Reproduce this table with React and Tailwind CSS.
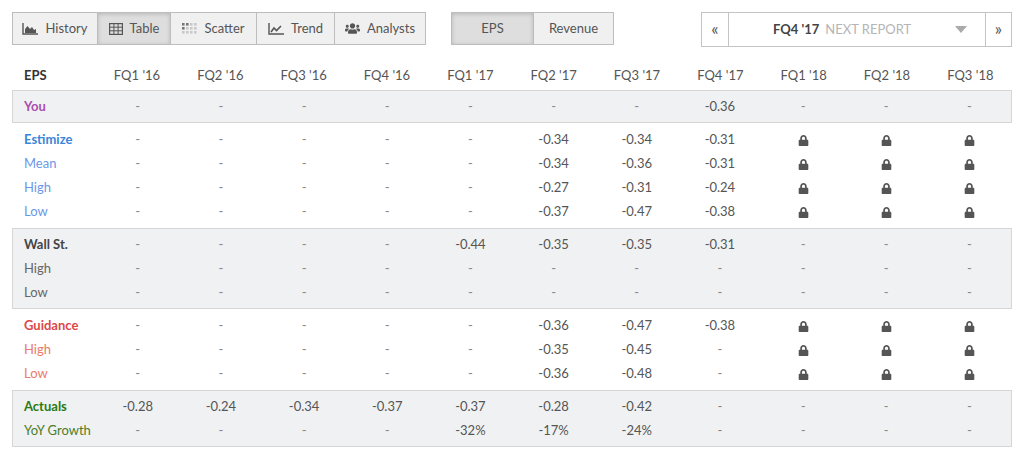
import React from "react";
import { FaUsers, FaLock } from "react-icons/fa";

const quarters = [
  "FQ1 '16", "FQ2 '16", "FQ3 '16", "FQ4 '16",
  "FQ1 '17", "FQ2 '17", "FQ3 '17", "FQ4 '17",
  "FQ1 '18", "FQ2 '18", "FQ3 '18",
];

const L = "lock";
const d = "-";

// sections of the table, gray ones get a border all round
const sections = [
  {
    gray: true,
    rows: [{ label: "You", cls: "font-bold text-[#a94fae]", vals: [d, d, d, d, d, d, d, "-0.36", d, d, d] }],
  },
  {
    gray: false,
    rows: [
      { label: "Estimize", cls: "font-bold text-[#3a86d8]", vals: [d, d, d, d, d, "-0.34", "-0.34", "-0.31", L, L, L] },
      { label: "Mean", cls: "text-[#6b98e6]", vals: [d, d, d, d, d, "-0.34", "-0.36", "-0.31", L, L, L] },
      { label: "High", cls: "text-[#6b98e6]", vals: [d, d, d, d, d, "-0.27", "-0.31", "-0.24", L, L, L] },
      { label: "Low", cls: "text-[#6b98e6]", vals: [d, d, d, d, d, "-0.37", "-0.47", "-0.38", L, L, L] },
    ],
  },
  {
    gray: true,
    rows: [
      { label: "Wall St.", cls: "font-bold text-[#444]", vals: [d, d, d, d, "-0.44", "-0.35", "-0.35", "-0.31", d, d, d] },
      { label: "High", cls: "text-[#666]", vals: [d, d, d, d, d, d, d, d, d, d, d] },
      { label: "Low", cls: "text-[#666]", vals: [d, d, d, d, d, d, d, d, d, d, d] },
    ],
  },
  {
    gray: false,
    rows: [
      { label: "Guidance", cls: "font-bold text-[#dc4848]", vals: [d, d, d, d, d, "-0.36", "-0.47", "-0.38", L, L, L] },
      { label: "High", cls: "text-[#ea7b6a]", vals: [d, d, d, d, d, "-0.35", "-0.45", d, L, L, L] },
      { label: "Low", cls: "text-[#ea7b6a]", vals: [d, d, d, d, d, "-0.36", "-0.48", d, L, L, L] },
    ],
  },
  {
    gray: true,
    rows: [
      { label: "Actuals", cls: "font-bold text-[#2d7a10]", vals: ["-0.28", "-0.24", "-0.34", "-0.37", "-0.37", "-0.28", "-0.42", d, d, d, d] },
      { label: "YoY Growth", cls: "text-[#4d7c28]", vals: [d, d, d, d, "-32%", "-17%", "-24%", d, d, d, d] },
    ],
  },
];

const HistoryIcon = () => (
  <svg width="16" height="12" viewBox="0 0 16 12">
    <path d="M1 0v11h15" stroke="#555" strokeWidth="1.4" fill="none" />
    <path d="M3 10V6l2.5-3 2.5 3 2-2 2 3 2-1v4z" fill="#555" />
  </svg>
);

const TableIcon = () => (
  <svg width="14" height="12" viewBox="0 0 14 12">
    <rect x="0.6" y="0.6" width="12.8" height="10.8" fill="none" stroke="#555" strokeWidth="1.2" />
    <path d="M0.6 4.2h12.8M0.6 7.8h12.8M4.9 0.6v10.8M9.1 0.6v10.8" stroke="#555" strokeWidth="1" />
  </svg>
);

const ScatterIcon = () => {
  const dots = [];
  for (let r = 0; r < 3; r++) {
    for (let c = 0; c < 4; c++) {
      const dark = (r === 0 && c < 2) || (r === 1 && c === 0);
      dots.push(
        <rect key={r + "-" + c} x={c * 4} y={r * 4} width="2.6" height="2.6" fill={dark ? "#777" : "#c9c9c9"} />
      );
    }
  }
  return (
    <svg width="15" height="11" viewBox="0 0 15 11">
      {dots}
    </svg>
  );
};

const TrendIcon = () => (
  <svg width="16" height="12" viewBox="0 0 16 12">
    <path d="M1 0v11h15" stroke="#555" strokeWidth="1.4" fill="none" />
    <path d="M3 9l3-4 2.5 2.5L13 3" stroke="#555" strokeWidth="1.6" fill="none" />
  </svg>
);

const tabs = [
  { name: "History", icon: <HistoryIcon />, w: "w-[84px]" },
  { name: "Table", icon: <TableIcon />, w: "w-[73px]", active: true },
  { name: "Scatter", icon: <ScatterIcon />, w: "w-[86px]" },
  { name: "Trend", icon: <TrendIcon />, w: "w-[78px]" },
  { name: "Analysts", icon: <FaUsers className="text-[#555] text-[15px]" />, w: "w-[91px]" },
];

const Cell = ({ v }) => {
  if (v === L) {
    return (
      <div className="flex items-center justify-center">
        <FaLock className="text-[#555] text-[11px]" />
      </div>
    );
  }
  return <div className={"text-center " + (v === d ? "text-[#888]" : "text-[#555]")}>{v}</div>;
};

export default function App() {
  return (
    <div
      className="w-[1022px] h-[456px] bg-white pt-[12px] pl-[12px] pr-[10px] text-[13px] text-[#555]"
      style={{ fontFamily: "Lato, 'Open Sans', sans-serif" }}
    >
      {/* toolbar */}
      <div className="flex items-start h-[35px]">
        <div className="flex h-[33px] border border-[#bdbdbd] bg-[#f0f0f0]">
          {tabs.map((t, i) => (
            <div
              key={t.name}
              className={
                "flex items-center justify-center gap-[7px] h-full " +
                t.w +
                (i > 0 ? " border-l border-[#bdbdbd]" : "") +
                (t.active ? " bg-[#dedede] shadow-[inset_0_1px_4px_rgba(0,0,0,0.18)]" : "")
              }
            >
              {t.icon}
              <span>{t.name}</span>
            </div>
          ))}
        </div>

        <div className="flex h-[33px] ml-[25px] border border-[#bdbdbd] bg-[#f0f0f0]">
          <div className="w-[81px] flex items-center justify-center bg-[#dedede] shadow-[inset_0_1px_4px_rgba(0,0,0,0.18)]">
            EPS
          </div>
          <div className="w-[80px] flex items-center justify-center border-l border-[#bdbdbd]">Revenue</div>
        </div>

        <div className="ml-auto flex h-[35px] w-[311px] border border-[#c4c4c4] bg-white">
          <div className="w-[26px] flex items-center justify-center text-[#555] text-[17px] pb-[2px]">«</div>
          <div className="flex-1 flex items-center border-l border-r border-[#c4c4c4] pl-[44px] pr-[18px]">
            <span className="font-bold text-[#444]">FQ4 '17</span>
            <span className="ml-[6px] text-[#b5b5b5]">NEXT REPORT</span>
            <svg className="ml-auto" width="12" height="7" viewBox="0 0 12 7">
              <path d="M0 0h12L6 7z" fill="#aaa" />
            </svg>
          </div>
          <div className="w-[25px] flex items-center justify-center text-[#555] text-[17px] pb-[2px]">»</div>
        </div>
      </div>

      {/* table header */}
      <div className="grid grid-cols-12 h-[28px] mt-[15px] items-center">
        <div className="pl-[12px] font-bold text-[#333]">EPS</div>
        {quarters.map((q) => (
          <div key={q} className="text-center text-[#555]">
            {q}
          </div>
        ))}
      </div>

      {/* body */}
      {sections.map((s, i) => (
        <div
          key={i}
          className={
            s.gray
              ? "bg-[#f0f1f2] border border-[#d6d6d6] pt-[4px] pb-[3px]"
              : "pt-[5px] pb-[4px] px-[1px]"
          }
        >
          {s.rows.map((r) => (
            <div key={r.label} className="grid grid-cols-12 h-[24px] items-center">
              <div className={"pl-[11px] " + r.cls}>{r.label}</div>
              {r.vals.map((v, j) => (
                <Cell key={j} v={v} />
              ))}
            </div>
          ))}
        </div>
      ))}
    </div>
  );
}
